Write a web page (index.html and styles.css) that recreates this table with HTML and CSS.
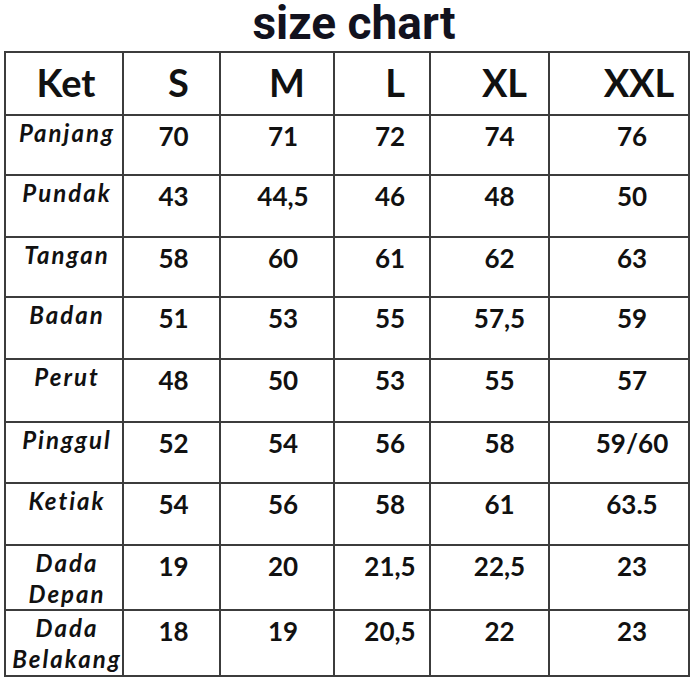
FILE: index.html
```html
<!DOCTYPE html>
<html>
<head>
<meta charset="utf-8">
<link rel="stylesheet" href="styles.css">
</head>
<body>
<div class="page">
  <h1 class="title">size chart</h1>
  <table class="chart">
    <colgroup>
      <col class="c-ket"><col class="c-s"><col class="c-m"><col class="c-l"><col class="c-xl"><col class="c-xxl">
    </colgroup>
    <thead>
      <tr class="r-head"><th>Ket</th><th>S</th><th>M</th><th>L</th><th>XL</th><th>XXL</th></tr>
    </thead>
    <tbody>
      <tr class="r1"><th>Panjang</th><td>70</td><td>71</td><td>72</td><td>74</td><td>76</td></tr>
      <tr class="r2"><th>Pundak</th><td>43</td><td>44,5</td><td>46</td><td>48</td><td>50</td></tr>
      <tr class="r3"><th>Tangan</th><td>58</td><td>60</td><td>61</td><td>62</td><td>63</td></tr>
      <tr class="r4"><th>Badan</th><td>51</td><td>53</td><td>55</td><td>57,5</td><td>59</td></tr>
      <tr class="r5"><th>Perut</th><td>48</td><td>50</td><td>53</td><td>55</td><td>57</td></tr>
      <tr class="r6"><th>Pinggul</th><td>52</td><td>54</td><td>56</td><td>58</td><td>59/60</td></tr>
      <tr class="r7"><th>Ketiak</th><td>54</td><td>56</td><td>58</td><td>61</td><td>63.5</td></tr>
      <tr class="r8"><th>Dada<br>Depan</th><td>19</td><td>20</td><td>21,5</td><td>22,5</td><td>23</td></tr>
      <tr class="r9"><th>Dada<br>Belakang</th><td>18</td><td>19</td><td>20,5</td><td>22</td><td>23</td></tr>
    </tbody>
  </table>
</div>
</body>
</html>
```
FILE: styles.css
```css
html, body {
  margin: 0;
  padding: 0;
  background: #ffffff;
}

.page {
  width: 700px;
  height: 700px;
  padding: 0 0 0 4px;
  box-sizing: border-box;
}

.title {
  margin: 0;
  height: 51px;
  font-family: Roboto, "Liberation Sans", sans-serif;
  font-weight: 700;
  font-size: 46px;
  line-height: 46px;
  letter-spacing: 0;
  color: #12121e;
  text-align: center;
  padding-left: 4px;
}

.chart {
  border-collapse: collapse;
  table-layout: fixed;
  width: 684px;
  font-family: Lato, "Open Sans", sans-serif;
  color: #111111;
}

.c-ket { width: 118px; }
.c-s { width: 97px; }
.c-m { width: 114px; }
.c-l { width: 96px; }
.c-xl { width: 119px; }
.c-xxl { width: 140px; }

.chart th,
.chart td {
  border: 2px solid #3c3c3c;
  vertical-align: top;
  text-align: center;
  padding: 0;
  overflow: visible;
  white-space: nowrap;
}

.r-head { height: 63px; }
.r1 { height: 60px; }
.r2 { height: 62px; }
.r3 { height: 60px; }
.r4 { height: 62px; }
.r5 { height: 63px; }
.r6 { height: 61px; }
.r7 { height: 62px; }
.r8 { height: 65px; }
.r9 { height: 66px; }

.chart .r-head th {
  font-size: 38px;
  font-weight: 700;
  line-height: 46px;
  padding-top: 6px;
}

.chart .r-head th:nth-child(1) { padding-left: 4px; }
.chart .r-head th:nth-child(2) { padding-left: 14px; }
.chart .r-head th:nth-child(3) { padding-left: 20px; }
.chart .r-head th:nth-child(4) { padding-left: 26px; }
.chart .r-head th:nth-child(5) { padding-left: 30px; }
.chart .r-head th:nth-child(6) { padding-left: 40px; }

.chart tbody th {
  font-size: 24px;
  font-weight: 700;
  font-style: italic;
  line-height: 31px;
  letter-spacing: 2px;
  padding-top: 1px;
  padding-left: 6px;
}

.chart tbody td {
  font-size: 26px;
  font-weight: 700;
  line-height: 30px;
  padding-top: 5px;
}

.chart tbody td:nth-child(2) { padding-left: 4px; }
.chart tbody td:nth-child(3) { padding-left: 12px; }
.chart tbody td:nth-child(4) { padding-left: 16px; }
.chart tbody td:nth-child(5) { padding-left: 20px; }
.chart tbody td:nth-child(6) { padding-left: 26px; }
```
